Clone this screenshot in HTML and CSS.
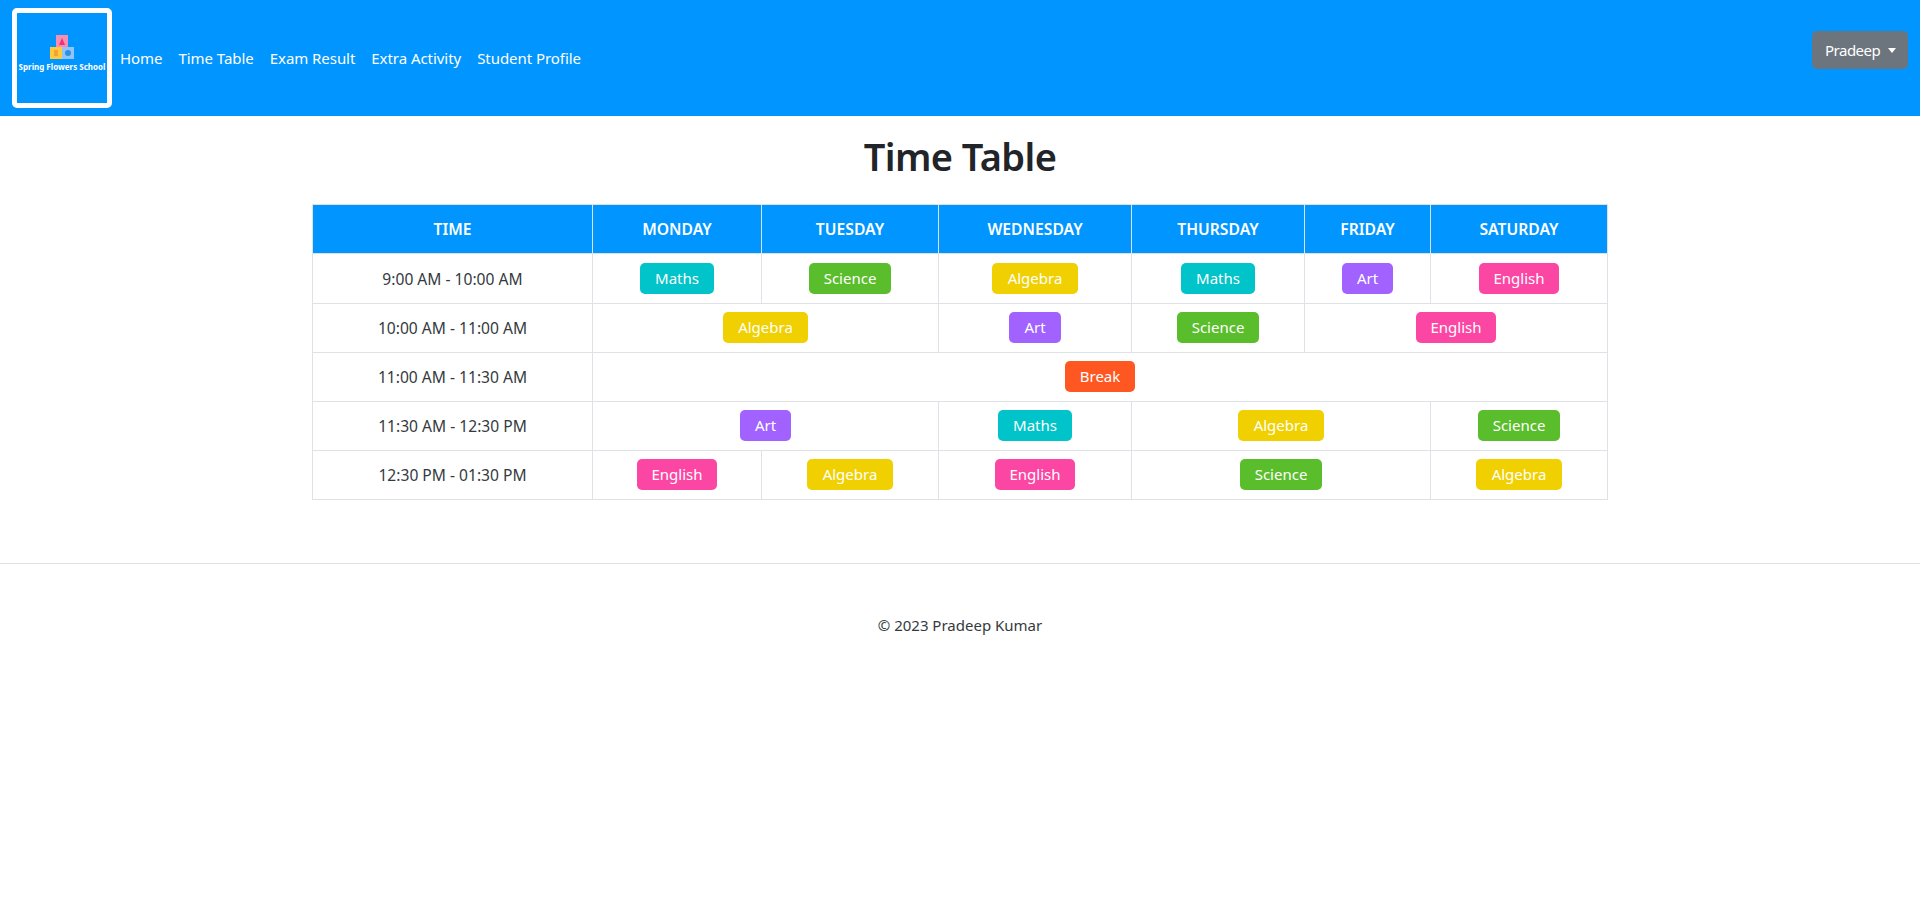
FILE: index.html
```html
<!DOCTYPE html>
<html lang="en">
<head>
<meta charset="utf-8">
<title>Time Table</title>
<link rel="stylesheet" href="styles.css">
</head>
<body>
<nav class="navbar">
  <a class="brand" href="#">
    <svg class="brand-icon" viewBox="0 0 24 24" width="24" height="24" aria-hidden="true">
      <rect x="6" y="0" width="12" height="12" fill="#f48fb1"/>
      <path d="M12 3l3 7H9z" fill="#f0307a"/>
      <rect x="0" y="12" width="12" height="12" fill="#ffc93c"/>
      <rect x="4" y="15" width="4" height="6" fill="#f7a036"/>
      <rect x="12" y="12" width="12" height="12" fill="#8fc4f5"/>
      <circle cx="18" cy="18" r="3" fill="#2d8fe8"/>
    </svg>
    <span class="brand-name">Spring Flowers School</span>
  </a>
  <ul class="nav-links">
    <li><a href="#">Home</a></li>
    <li><a href="#">Time Table</a></li>
    <li><a href="#">Exam Result</a></li>
    <li><a href="#">Extra Activity</a></li>
    <li><a href="#">Student Profile</a></li>
  </ul>
  <button class="user-btn" type="button">Pradeep<span class="caret"></span></button>
</nav>
<main class="content">
  <h1>Time Table</h1>
  <table class="timetable">
    <colgroup>
      <col class="c-time"><col class="c-mon"><col class="c-tue"><col class="c-wed"><col class="c-thu"><col class="c-fri"><col class="c-sat">
    </colgroup>
    <thead>
      <tr><th>Time</th><th>Monday</th><th>Tuesday</th><th>Wednesday</th><th>Thursday</th><th>Friday</th><th>Saturday</th></tr>
    </thead>
    <tbody>
      <tr>
        <td>9:00 AM - 10:00 AM</td>
        <td><span class="tag maths">Maths</span></td>
        <td><span class="tag science">Science</span></td>
        <td><span class="tag algebra">Algebra</span></td>
        <td><span class="tag maths">Maths</span></td>
        <td><span class="tag art">Art</span></td>
        <td><span class="tag english">English</span></td>
      </tr>
      <tr>
        <td>10:00 AM - 11:00 AM</td>
        <td colspan="2"><span class="tag algebra">Algebra</span></td>
        <td><span class="tag art">Art</span></td>
        <td><span class="tag science">Science</span></td>
        <td colspan="2"><span class="tag english">English</span></td>
      </tr>
      <tr>
        <td>11:00 AM - 11:30 AM</td>
        <td colspan="6"><span class="tag break">Break</span></td>
      </tr>
      <tr>
        <td>11:30 AM - 12:30 PM</td>
        <td colspan="2"><span class="tag art">Art</span></td>
        <td><span class="tag maths">Maths</span></td>
        <td colspan="2"><span class="tag algebra">Algebra</span></td>
        <td><span class="tag science">Science</span></td>
      </tr>
      <tr>
        <td>12:30 PM - 01:30 PM</td>
        <td><span class="tag english">English</span></td>
        <td><span class="tag algebra">Algebra</span></td>
        <td><span class="tag english">English</span></td>
        <td colspan="2"><span class="tag science">Science</span></td>
        <td><span class="tag algebra">Algebra</span></td>
      </tr>
    </tbody>
  </table>
</main>
<footer class="footer">
  <p>© 2023 Pradeep Kumar</p>
</footer>
</body>
</html>
```
FILE: styles.css
```css
* { box-sizing: border-box; }
html, body { margin: 0; padding: 0; }
body {
  font-family: "Noto Sans", "Open Sans", sans-serif;
  font-size: 15px;
  line-height: 24px;
  color: #212529;
  background: #fff;
}
.navbar {
  display: flex;
  align-items: center;
  height: 116px;
  background: #0095ff;
  padding: 0 12px;
}
.brand {
  flex: none;
  width: 100px;
  height: 100px;
  border: 5px solid #fff;
  border-radius: 5px;
  display: flex;
  flex-direction: column;
  align-items: center;
  justify-content: center;
  padding-bottom: 10px;
  text-decoration: none;
}
.brand-icon { display: block; filter: blur(0.4px); }
.brand-name {
  color: #fff;
  font-size: 8px;
  line-height: 10px;
  font-weight: 700;
  white-space: nowrap;
  margin-top: 3px;
}
.nav-links {
  display: flex;
  list-style: none;
  margin: 0 0 0 8px;
  padding: 0;
  gap: 16px;
}
.nav-links a {
  color: #fff;
  text-decoration: none;
  white-space: nowrap;
  letter-spacing: -0.05px;
}
.user-btn {
  align-self: flex-start;
  margin: 31px 0 0 auto;
  height: 38px;
  width: 96px;
  padding: 0 12px 0 13px;
  border: 0;
  border-radius: 5px;
  background: #6c757d;
  color: #fff;
  font: inherit;
  letter-spacing: -0.5px;
  display: flex;
  align-items: center;
  justify-content: space-between;
}
.caret {
  border-top: 5px solid #fff;
  border-left: 4px solid transparent;
  border-right: 4px solid transparent;
}
.content { padding: 0 312px; }
h1 {
  margin: 0;
  padding: 12px 0 20px;
  text-align: center;
  font-size: 38px;
  line-height: 56px;
  font-weight: 600;
  letter-spacing: -0.6px;
  color: #212529;
}
.timetable {
  width: 1295px;
  table-layout: fixed;
  border-collapse: collapse;
  text-align: center;
}
.c-time { width: 280px; }
.c-mon { width: 169px; }
.c-tue { width: 177px; }
.c-wed { width: 193px; }
.c-thu { width: 173px; }
.c-fri { width: 126px; }
.c-sat { width: 177px; }
.timetable th, .timetable td {
  border: 1px solid #dee2e6;
  padding: 0;
  vertical-align: middle;
}
.timetable th {
  height: 49px;
  background: #0095ff;
  color: #fff;
  font-size: 15.7px;
  font-weight: 600;
  text-transform: uppercase;
}
.timetable td {
  height: 49px;
  font-size: 15.6px;
  color: #343a40;
}
.timetable tbody tr:first-child td { height: 50px; }
.tag {
  display: inline-block;
  padding: 0 15px;
  height: 31px;
  margin-bottom: 2px;
  line-height: 31px;
  border-radius: 5px;
  color: #fff;
  font-size: 15px;
  vertical-align: middle;
}
.timetable tbody tr:first-child .tag { margin-bottom: 0; }
.maths { background: #00c4c9; }
.science { background: #5abd2b; }
.algebra { background: #f0d000; padding: 0 15.5px; }
.art { background: #a162ff; }
.english { background: #fc46a4; padding: 0 14.5px; }
.break { background: #ff5722; }
.footer {
  margin-top: 63px;
  border-top: 1px solid #dee2e6;
  padding-top: 49px;
  text-align: center;
  color: #343a40;
}
.footer p { margin: 0; }
```
